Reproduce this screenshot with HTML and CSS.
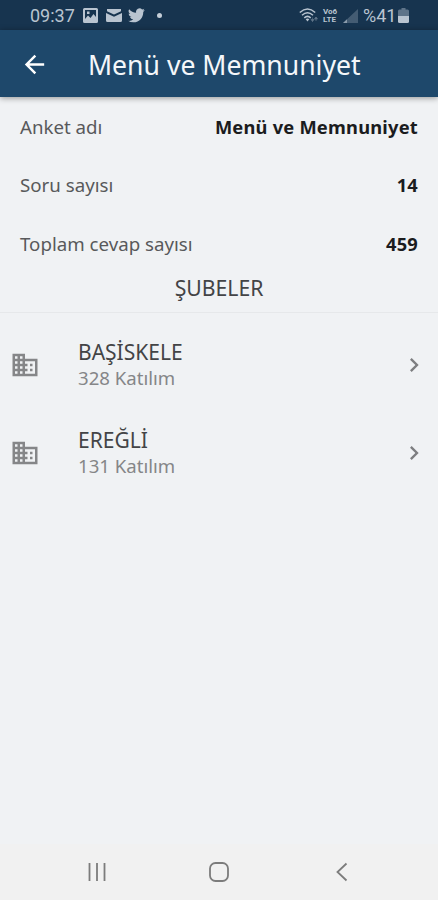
FILE: index.html
```html
<!DOCTYPE html>
<html lang="tr">
<head>
<meta charset="utf-8">
<title>Menü ve Memnuniyet</title>
<link rel="stylesheet" href="styles.css">
</head>
<body>
<div class="status">
  <span class="clock">09:37</span>
  <svg class="st-photo" width="15" height="15" viewBox="0 0 15 15"><path fill-rule="evenodd" d="M1.500 0h12A1.500 1.500 0 0 1 15 1.500v12a1.500 1.500 0 0 1-1.500 1.500h-12A1.500 1.500 0 0 1 0 13.500v-12A1.500 1.500 0 0 1 1.500 0zM2 2v9l3-3.500 2.500 2.500 3-4 2.500 3V2zM4 3.500h2.500V6H4z"/></svg>
  <svg class="st-mail" width="16" height="13" viewBox="0 0 16 13"><path d="M1 0h14v2.200L8 5.500 1 2.200zM0 4l8 3.700L16 4v7.500a1.500 1.500 0 0 1-1.500 1.500h-13A1.500 1.500 0 0 1 0 11.500z"/></svg>
  <svg class="st-bird" width="17" height="15" viewBox="0 2.500 24 20"><path d="M23.600 4.900a10 10 0 0 1-2.800.8 4.900 4.900 0 0 0 2.200-2.700c-1 .6-2 1-3.100 1.200a4.900 4.900 0 0 0-8.400 4.500A14 14 0 0 1 1.700 3.600a4.900 4.900 0 0 0 1.500 6.600 4.900 4.900 0 0 1-2.200-.6v.1a4.900 4.900 0 0 0 4 4.800 5 5 0 0 1-2.200.1 4.900 4.900 0 0 0 4.600 3.400A9.900 9.900 0 0 1 0 20a14 14 0 0 0 7.500 2.200c9.100 0 14-7.500 14-14v-.6a10 10 0 0 0 2.100-2.700z"/></svg>
  <span class="dot"></span>
  <span class="spacer"></span>
  <svg class="st-wifi" width="20" height="15" viewBox="0 0 20 15"><g fill="none" stroke="#b9c4d0" stroke-width="1.500"><path d="M.8 4.500Q8.500-2.500 16.200 4.500M3 7.300q5.500-5 11 0M5.300 9.900q3.200-3 6.400 0"/></g><path d="M6.700 11.200q1.800-1.200 3.600 0L8.500 13.500z"/><path opacity=".45" d="M13.500 9.500v4M17 9v4M12 11.500l1.500 2 1.500-2zM15.500 11l1.500-2 1.500 2z" stroke="#b9c4d0" stroke-width=".7"/></svg>
  <span class="volte"><span>Vo6</span><span>LTE</span></span>
  <svg class="st-signal" width="15" height="14" viewBox="0 0 15 14"><path opacity=".28" d="M15 0v14H0z"/><path opacity=".6" d="M4 10.300V14H0z"/></svg>
  <span class="percent">%41</span>
  <svg class="st-batt" width="11" height="15" viewBox="0 0 11 15"><path opacity=".45" d="M3.500 0h4v1.500H9.500A1.500 1.500 0 0 1 11 3v5H0V3a1.500 1.500 0 0 1 1.500-1.500h2z"/><path d="M0 8h11v5.500A1.500 1.500 0 0 1 9.500 15h-8A1.500 1.500 0 0 1 0 13.500z"/></svg>
</div>
<header class="appbar">
  <svg class="back" width="29" height="29" viewBox="0 0 24 24"><path d="M20 11H7.830l5.590-5.590L12 4l-8 8 8 8 1.410-1.410L7.830 13H20v-2z"/></svg>
  <h1>Menü ve Memnuniyet</h1>
</header>
<main>
  <dl class="summary">
    <div><dt>Anket adı</dt><dd>Menü ve Memnuniyet</dd></div>
    <div><dt>Soru sayısı</dt><dd>14</dd></div>
    <div><dt>Toplam cevap sayısı</dt><dd>459</dd></div>
  </dl>
  <h2>ŞUBELER</h2>
  <ul class="branches">
    <li>
      <svg class="building" width="30" height="30" viewBox="0 0 24 24"><path d="M12 7V3H2v18h20V7H12zM6 19H4v-2h2v2zm0-4H4v-2h2v2zm0-4H4V9h2v2zm0-4H4V5h2v2zm4 12H8v-2h2v2zm0-4H8v-2h2v2zm0-4H8V9h2v2zm0-4H8V5h2v2zm10 12h-8v-2h2v-2h-2v-2h2v-2h-2V9h8v10zm-2-8h-2v2h2v-2zm0 4h-2v2h2v-2z"/></svg>
      <div class="text"><span class="name">BAŞİSKELE</span><span class="count">328 Katılım</span></div>
      <svg class="chev" width="28" height="28" viewBox="0 0 24 24"><path d="M10 6 8.590 7.410 13.170 12l-4.580 4.590L10 18l6-6z"/></svg>
    </li>
    <li>
      <svg class="building" width="30" height="30" viewBox="0 0 24 24"><path d="M12 7V3H2v18h20V7H12zM6 19H4v-2h2v2zm0-4H4v-2h2v2zm0-4H4V9h2v2zm0-4H4V5h2v2zm4 12H8v-2h2v2zm0-4H8v-2h2v2zm0-4H8V9h2v2zm0-4H8V5h2v2zm10 12h-8v-2h2v-2h-2v-2h2v-2h-2V9h8v10zm-2-8h-2v2h2v-2zm0 4h-2v2h2v-2z"/></svg>
      <div class="text"><span class="name">EREĞLİ</span><span class="count">131 Katılım</span></div>
      <svg class="chev" width="28" height="28" viewBox="0 0 24 24"><path d="M10 6 8.590 7.410 13.170 12l-4.580 4.590L10 18l6-6z"/></svg>
    </li>
  </ul>
</main>
<nav class="navbar">
  <svg width="20" height="20" viewBox="0 0 20 20"><path d="M2.500 1v18M10 1v18M17.500 1v18"/></svg>
  <svg width="20" height="20" viewBox="0 0 20 20"><rect x="1" y="1" width="18" height="18" rx="5.500"/></svg>
  <svg width="20" height="20" viewBox="0 0 20 20"><path d="M15.500 1.500 6.500 10l9 8.500"/></svg>
</nav>
</body>
</html>
```
FILE: styles.css
```css
* { box-sizing: border-box; margin: 0; padding: 0; }
body {
  width: 438px;
  height: 900px;
  display: flex;
  flex-direction: column;
  overflow: hidden;
  background: #f0f2f4;
  font-family: "Noto Sans", "Open Sans", sans-serif;
}
svg { display: block; flex: none; }
.status {
  flex: none;
  height: 30px;
  display: flex;
  align-items: center;
  padding: 1px 29px 0 30px;
  background: #17344f;
  color: #b9c4d0;
  fill: #b9c4d0;
  font-family: Roboto, sans-serif;
  font-size: 18px;
}
.clock { width: 53px; }
.st-mail { margin-left: 8px; }
.st-bird { margin-left: 6px; }
.dot { width: 5px; height: 5px; border-radius: 50%; background: #c5ced8; margin-left: 12px; }
.spacer { flex: 1; }
.volte {
  display: flex;
  flex-direction: column;
  width: 16px;
  margin-left: 4px;
  font-size: 8px;
  line-height: 8px;
  font-weight: 700;
}
.st-signal { margin-left: 4px; }
.percent { margin-left: 5px; width: 34px; }
.st-batt { margin-left: 1px; }
.appbar {
  flex: none;
  height: 67px;
  display: flex;
  align-items: center;
  padding: 2px 0 0 20px;
  background: #1e486b;
  box-shadow: 0 1px 6px rgba(0, 0, 0, .4);
  color: #f4f7fa;
  fill: #fff;
}
h1 {
  margin-left: 39px;
  font-size: 26.600px;
  line-height: 36px;
  font-weight: 400;
  white-space: nowrap;
}
main { flex: 1; }
.summary { padding-top: 1px; }
.summary div {
  height: 58.300px;
  display: flex;
  align-items: center;
  justify-content: space-between;
  padding: 0 20px;
  line-height: 26px;
  white-space: nowrap;
}
dt { font-size: 18.700px; color: #58595b; }
dd { font-size: 18.300px; letter-spacing: .22px; color: #1b1c1e; font-weight: 700; }
h2 {
  height: 40px;
  border-bottom: 1px solid #e6e8ea;
  text-align: center;
  font-size: 21.200px;
  line-height: 30px;
  font-weight: 400;
  color: #434446;
}
.branches { list-style: none; padding-top: 8px; }
.branches li { height: 88px; display: flex; align-items: center; padding: 0 10px; }
.building { fill: #858688; }
.chev { fill: #7d7e80; }
.text { flex: 1; display: flex; flex-direction: column; padding-left: 38px; }
.name { padding-top: 1px; margin-bottom: -1px; font-size: 21px; line-height: 27px; color: #434446; }
.count { font-size: 18.600px; line-height: 26px; color: #858688; }
.navbar {
  flex: none;
  height: 56px;
  display: flex;
  align-items: center;
  justify-content: space-between;
  padding: 0 87px;
  background: #f1f1f1;
  fill: none;
  stroke: #7c7c7c;
  stroke-width: 1.800;
}
```
